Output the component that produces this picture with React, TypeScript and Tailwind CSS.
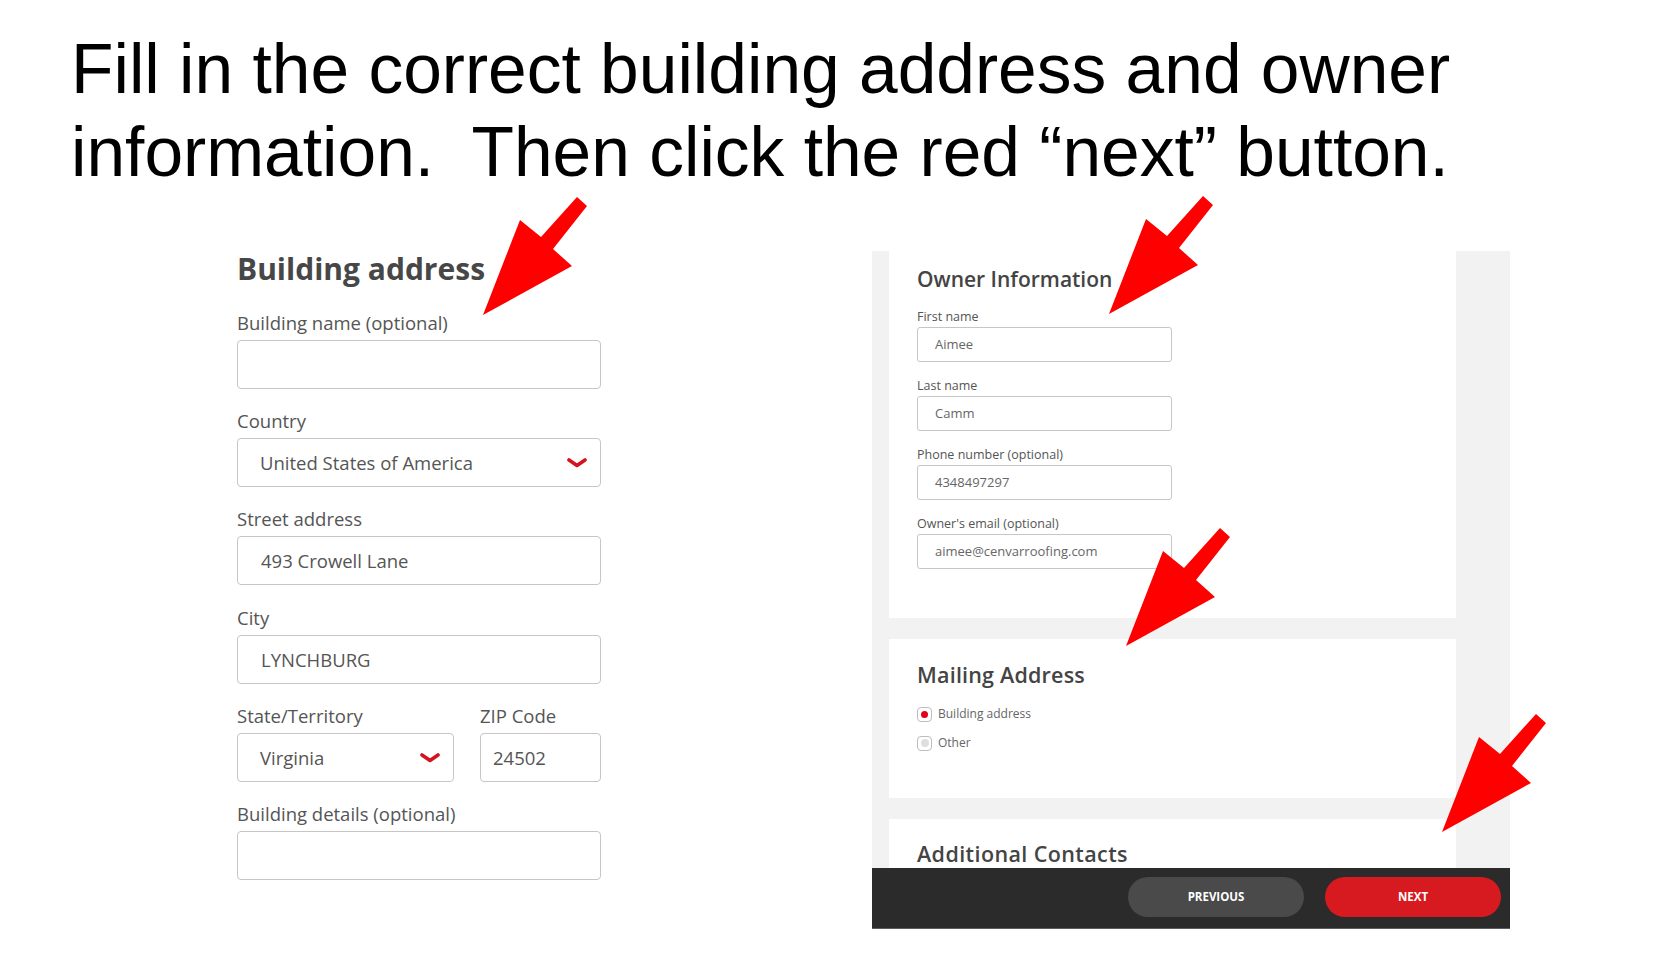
import type { ReactNode } from 'react'

function Arrow({ className }: { className: string }) {
  return (
    <svg className={className} width="106" height="120" viewBox="0 0 106 120">
      <polygon points="0,118 37,23 58,40 94,0 104,9 70,52 89,69" fill="#ff0000" />
    </svg>
  )
}

function Chevron() {
  return (
    <svg width="20" height="10" viewBox="0 0 20 10">
      <path d="M2 2 L10 7.5 L18 2" fill="none" stroke="#d3141e" strokeWidth="3.6" strokeLinecap="round" strokeLinejoin="round" />
    </svg>
  )
}

function BigLabel({ children, className = '' }: { children: ReactNode; className?: string }) {
  return <div className={`text-[18.5px] leading-6 text-[#555] ${className}`}>{children}</div>
}

function BigInput({ value, className = '', chevron }: { value?: string; className?: string; chevron?: boolean }) {
  return (
    <div
      className={`mt-[5px] h-[49px] flex items-center justify-between rounded-[4px] border border-[#c6c6c6] bg-white text-[18.5px] text-[#555] pr-[13px] ${className}`}
    >
      <span>{value}</span>
      {chevron && <Chevron />}
    </div>
  )
}

function SmallField({ label, value }: { label: string; value: string }) {
  return (
    <>
      <div className="mt-4 text-[12.5px] leading-4 text-[#555]">{label}</div>
      <div className="mt-[2px] h-[35px] w-[255px] flex items-center rounded-[3px] border border-[#c6c6c6] pl-[17px] text-[13px] text-[#666]">
        {value}
      </div>
    </>
  )
}

function Radio({ checked, label }: { checked?: boolean; label: string }) {
  return (
    <div className="flex h-4 items-center gap-[6px]">
      <span className="flex h-[15px] w-[15px] items-center justify-center rounded-[4px] border border-[#bdbdbd] bg-white">
        {checked ? (
          <span className="h-[7px] w-[7px] rounded-full bg-[#e3001b]" />
        ) : (
          <span className="h-[8px] w-[8px] rounded-full bg-[#dedede]" />
        )}
      </span>
      <span className="text-[12px] text-[#666]">{label}</span>
    </div>
  )
}

export default function App() {
  return (
    <div className="relative min-h-[963px] w-full bg-white font-['Open_Sans',sans-serif]">
      {/* Instruction */}
      <div className="pl-[71px] pt-[28px] font-['Liberation_Sans',Arial,sans-serif] text-[69.5px] leading-[83px] text-black whitespace-pre">
        <div>Fill in the correct building address and owner</div>
        <div>information.  Then click the red “next” button.</div>
      </div>

      <div className="mt-[57px] flex items-start">
        {/* Building address form */}
        <div className="ml-[237px] flex w-[364px] flex-col">
          <h2 className="text-[30px] font-bold leading-[36px] text-[#474747]">Building address</h2>
          <BigLabel className="mt-6">Building name (optional)</BigLabel>
          <BigInput />
          <BigLabel className="mt-5">Country</BigLabel>
          <BigInput value="United States of America" className="pl-[22px]" chevron />
          <BigLabel className="mt-5">Street address</BigLabel>
          <BigInput value="493 Crowell Lane" className="pl-[23px]" />
          <BigLabel className="mt-[21px]">City</BigLabel>
          <BigInput value="LYNCHBURG" className="pl-[23px]" />
          <div className="mt-5 flex gap-[26px]">
            <div className="flex w-[217px] flex-col">
              <BigLabel>State/Territory</BigLabel>
              <BigInput value="Virginia" className="pl-[22px]" chevron />
            </div>
            <div className="flex w-[121px] flex-col">
              <BigLabel>ZIP Code</BigLabel>
              <BigInput value="24502" className="pl-[12px]" />
            </div>
          </div>
          <BigLabel className="mt-5">Building details (optional)</BigLabel>
          <BigInput />
        </div>

        {/* Owner panel */}
        <div className="ml-[271px] flex w-[638px] flex-col bg-[#f2f2f2]">
          <div className="ml-[17px] mr-[54px] flex flex-col gap-[21px]">
            <div className="flex h-[367px] flex-col bg-white px-[28px] pt-[14px]">
              <h3 className="text-[21px] font-semibold leading-[28px] text-[#444]">Owner Information</h3>
              <SmallField label="First name" value="Aimee" />
              <SmallField label="Last name" value="Camm" />
              <SmallField label="Phone number (optional)" value="4348497297" />
              <SmallField label="Owner's email (optional)" value="aimee@cenvarroofing.com" />
            </div>
            <div className="flex h-[159px] flex-col bg-white px-[28px] pt-[22px]">
              <h3 className="text-[21.5px] font-semibold leading-[28px] tracking-[0.2px] text-[#444]">Mailing Address</h3>
              <div className="mt-[17px]">
                <Radio checked label="Building address" />
              </div>
              <div className="mt-[13px]">
                <Radio label="Other" />
              </div>
            </div>
            <div className="h-[49px] overflow-hidden bg-white px-[28px] pt-[21px]">
              <h3 className="text-[21.5px] font-semibold leading-[28px] tracking-[0.4px] text-[#444]">Additional Contacts</h3>
            </div>
          </div>
          <div className="flex h-[61px] items-start justify-end gap-[21px] border-b border-[#5c5c5c] bg-[#2b2b2b] pr-[9px] pt-[9px]">
            <button className="flex h-10 w-[176px] items-center justify-center rounded-full bg-[#4a4a4a] text-[11.5px] font-bold text-white">
              PREVIOUS
            </button>
            <button className="flex h-10 w-[176px] items-center justify-center rounded-full bg-[#d71920] text-[11.5px] font-bold text-white">
              NEXT
            </button>
          </div>
        </div>
      </div>

      <Arrow className="absolute left-[483px] top-[197px]" />
      <Arrow className="absolute left-[1109px] top-[196px]" />
      <Arrow className="absolute left-[1126px] top-[528px]" />
      <Arrow className="absolute left-[1442px] top-[714px]" />
    </div>
  )
}
